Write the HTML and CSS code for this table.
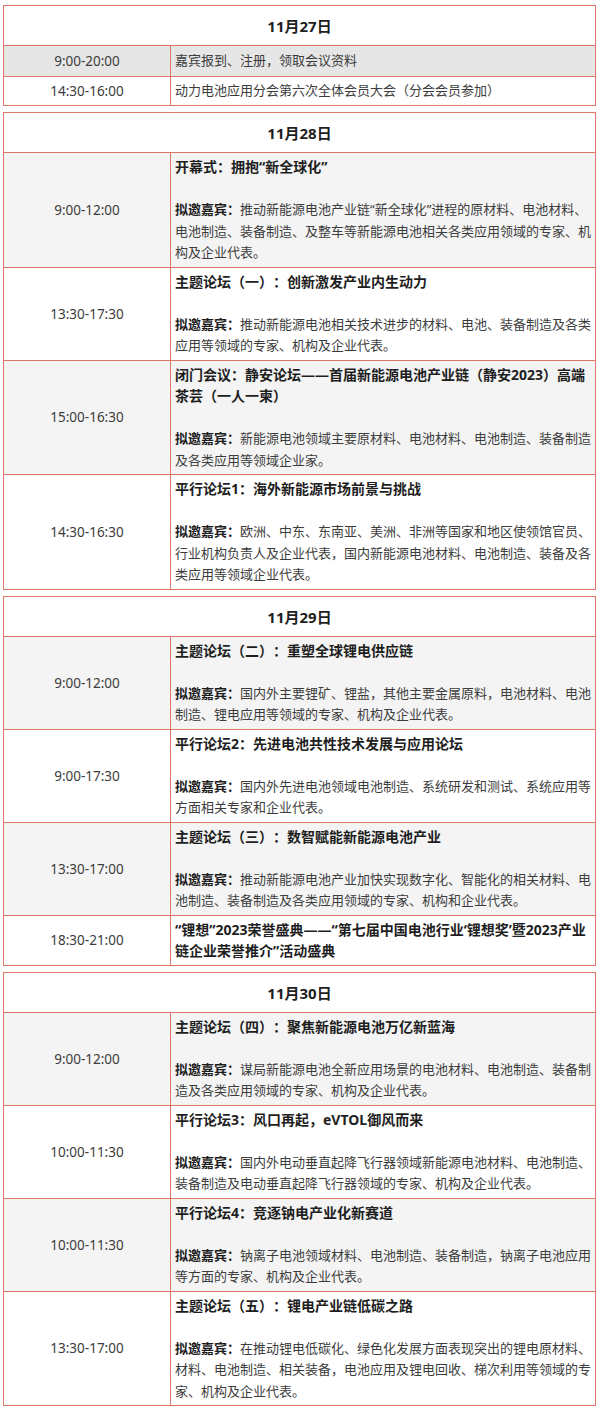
FILE: index.html
```html
<!DOCTYPE html>
<html lang="zh-CN">
<head>
<meta charset="utf-8">
<title>会议日程</title>
<link rel="stylesheet" href="styles.css">
</head>
<body>
<div class="page">

<table class="day day-first">
  <colgroup><col class="c-time"><col class="c-body"></colgroup>
  <tr><th colspan="2" class="date">11月27日</th></tr>
  <tr class="shade dark r1"><td class="time">9:00-20:00</td><td class="body">嘉宾报到、注册，领取会议资料</td></tr>
  <tr class="r2"><td class="time">14:30-16:00</td><td class="body">动力电池应用分会第六次全体会员大会（分会会员参加）</td></tr>
</table>

<table class="day">
  <colgroup><col class="c-time"><col class="c-body"></colgroup>
  <tr><th colspan="2" class="date">11月28日</th></tr>
  <tr class="shade"><td class="time">9:00-12:00</td><td class="body">
    <p class="title">开幕式：拥抱“新全球化”</p>
    <p class="guests"><b>拟邀嘉宾：</b>推动新能源电池产业链“新全球化”进程的原材料、电池材料、电池制造、装备制造、及整车等新能源电池相关各类应用领域的专家、机构及企业代表。</p>
  </td></tr>
  <tr><td class="time">13:30-17:30</td><td class="body">
    <p class="title">主题论坛（一）：创新激发产业内生动力</p>
    <p class="guests"><b>拟邀嘉宾：</b>推动新能源电池相关技术进步的材料、电池、装备制造及各类应用等领域的专家、机构及企业代表。</p>
  </td></tr>
  <tr class="shade"><td class="time">15:00-16:30</td><td class="body">
    <p class="title">闭门会议：静安论坛——首届新能源电池产业链（静安2023）高端茶芸（一人一柬）</p>
    <p class="guests"><b>拟邀嘉宾：</b>新能源电池领域主要原材料、电池材料、电池制造、装备制造及各类应用等领域企业家。</p>
  </td></tr>
  <tr><td class="time">14:30-16:30</td><td class="body">
    <p class="title">平行论坛1：海外新能源市场前景与挑战</p>
    <p class="guests"><b>拟邀嘉宾：</b>欧洲、中东、东南亚、美洲、非洲等国家和地区使领馆官员、行业机构负责人及企业代表，国内新能源电池材料、电池制造、装备及各类应用等领域企业代表。</p>
  </td></tr>
</table>

<table class="day">
  <colgroup><col class="c-time"><col class="c-body"></colgroup>
  <tr><th colspan="2" class="date">11月29日</th></tr>
  <tr class="shade"><td class="time">9:00-12:00</td><td class="body">
    <p class="title">主题论坛（二）：重塑全球锂电供应链</p>
    <p class="guests"><b>拟邀嘉宾：</b>国内外主要锂矿、锂盐，其他主要金属原料，电池材料、电池制造、锂电应用等领域的专家、机构及企业代表。</p>
  </td></tr>
  <tr><td class="time">9:00-17:30</td><td class="body">
    <p class="title">平行论坛2：先进电池共性技术发展与应用论坛</p>
    <p class="guests"><b>拟邀嘉宾：</b>国内外先进电池领域电池制造、系统研发和测试、系统应用等方面相关专家和企业代表。</p>
  </td></tr>
  <tr class="shade"><td class="time">13:30-17:00</td><td class="body">
    <p class="title">主题论坛（三）：数智赋能新能源电池产业</p>
    <p class="guests"><b>拟邀嘉宾：</b>推动新能源电池产业加快实现数字化、智能化的相关材料、电池制造、装备制造及各类应用领域的专家、机构和企业代表。</p>
  </td></tr>
  <tr><td class="time">18:30-21:00</td><td class="body">
    <p class="title">“锂想”2023荣誉盛典——“第七届中国电池行业‘锂想奖’暨2023产业链企业荣誉推介”活动盛典</p>
  </td></tr>
</table>

<table class="day">
  <colgroup><col class="c-time"><col class="c-body"></colgroup>
  <tr><th colspan="2" class="date">11月30日</th></tr>
  <tr class="shade"><td class="time">9:00-12:00</td><td class="body">
    <p class="title">主题论坛（四）：聚焦新能源电池万亿新蓝海</p>
    <p class="guests"><b>拟邀嘉宾：</b>谋局新能源电池全新应用场景的电池材料、电池制造、装备制造及各类应用领域的专家、机构及企业代表。</p>
  </td></tr>
  <tr><td class="time">10:00-11:30</td><td class="body">
    <p class="title">平行论坛3：风口再起，eVTOL御风而来</p>
    <p class="guests"><b>拟邀嘉宾：</b>国内外电动垂直起降飞行器领域新能源电池材料、电池制造、装备制造及电动垂直起降飞行器领域的专家、机构及企业代表。</p>
  </td></tr>
  <tr class="shade"><td class="time">10:00-11:30</td><td class="body">
    <p class="title">平行论坛4：竞逐钠电产业化新赛道</p>
    <p class="guests"><b>拟邀嘉宾：</b>钠离子电池领域材料、电池制造、装备制造，钠离子电池应用等方面的专家、机构及企业代表。</p>
  </td></tr>
  <tr><td class="time">13:30-17:00</td><td class="body">
    <p class="title">主题论坛（五）：锂电产业链低碳之路</p>
    <p class="guests"><b>拟邀嘉宾：</b>在推动锂电低碳化、绿色化发展方面表现突出的锂电原材料、材料、电池制造、相关装备，电池应用及锂电回收、梯次利用等领域的专家、机构及企业代表。</p>
  </td></tr>
</table>

</div>
</body>
</html>
```

FILE: styles.css
```css
html, body {
  margin: 0;
  padding: 0;
  background: #ffffff;
}

.page {
  padding: 5px 0 0 3px;
  display: flex;
  flex-direction: column;
  gap: 6px;
}

.day {
  width: 593px;
  border-collapse: collapse;
  table-layout: fixed;
  font-family: "Noto Sans", "Noto Sans CJK SC", sans-serif;
  color: #3c3c3c;
  text-spacing-trim: space-all;
}

.c-time { width: 167px; }

.day th,
.day td {
  border: 1px solid #de7767;
}

.date {
  height: 39px;
  padding: 0;
  font-size: 15px;
  font-weight: bold;
  color: #1e1e1e;
  text-align: center;
  vertical-align: middle;
  background: #ffffff;
}

.time {
  font-size: 13.5px;
  color: #3c3c3c;
  text-align: center;
  vertical-align: middle;
  padding: 0;
}

.body {
  font-size: 13px;
  line-height: 21.5px;
  padding: 3px 2px 3px 4px;
  vertical-align: middle;
  text-align: left;
}

.shade td { background: #f4f4f4; }
.shade.dark td { background: #e6e6e6; }

.day-first .r1 td { height: 30px; padding-top: 0; padding-bottom: 0; }
.day-first .r2 td { height: 28px; padding-top: 0; padding-bottom: 0; }

.title {
  margin: 0;
  font-size: 14px;
  font-weight: bold;
  color: #1e1e1e;
}

.guests {
  margin: 21.5px 0 0 0;
}

.guests b {
  font-weight: bold;
  color: #1e1e1e;
}
```
